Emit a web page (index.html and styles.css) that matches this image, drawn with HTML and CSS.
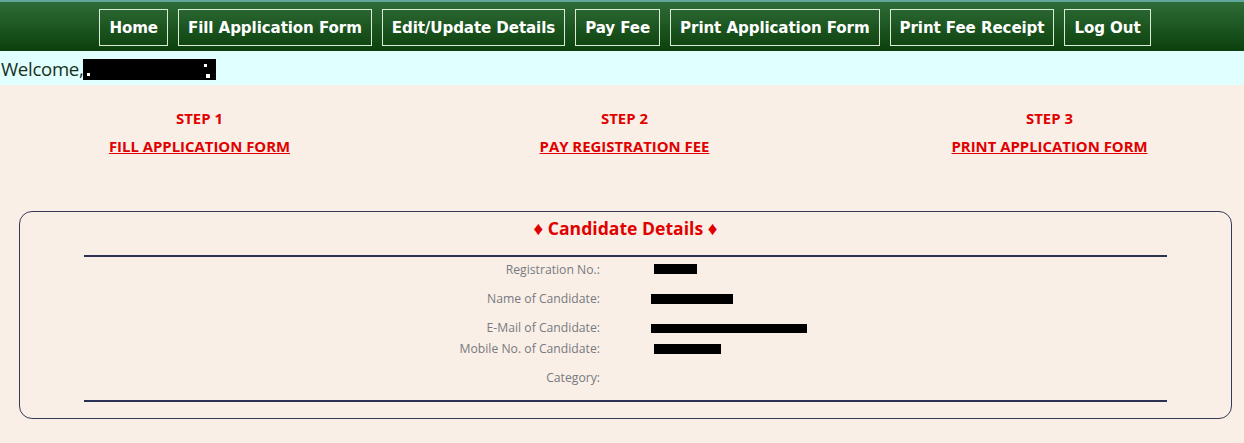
FILE: index.html
```html
<!DOCTYPE html>
<html lang="en">
<head>
<meta charset="utf-8">
<title>Candidate Dashboard</title>
<link rel="stylesheet" href="styles.css">
</head>
<body>
<header class="topbar">
  <nav class="nav">
    <a class="nav-btn" href="#">Home</a>
    <a class="nav-btn" href="#">Fill Application Form</a>
    <a class="nav-btn" href="#">Edit/Update Details</a>
    <a class="nav-btn" href="#">Pay Fee</a>
    <a class="nav-btn" href="#">Print Application Form</a>
    <a class="nav-btn" href="#">Print Fee Receipt</a>
    <a class="nav-btn" href="#">Log Out</a>
  </nav>
</header>
<div class="welcome">
  <span class="welcome-text">Welcome,</span><span class="redact redact-welcome"><i class="speck s1"></i><i class="speck s2"></i><i class="speck s3"></i></span>
</div>
<main class="main">
  <section class="steps">
    <div class="step">
      <div class="step-title">STEP 1</div>
      <a class="step-link" href="#">FILL APPLICATION FORM</a>
    </div>
    <div class="step">
      <div class="step-title">STEP 2</div>
      <a class="step-link" href="#">PAY REGISTRATION FEE</a>
    </div>
    <div class="step">
      <div class="step-title">STEP 3</div>
      <a class="step-link" href="#">PRINT APPLICATION FORM</a>
    </div>
  </section>
  <section class="card">
    <h2 class="card-title"><span class="diamond">♦</span> Candidate Details <span class="diamond">♦</span></h2>
    <hr class="rule">
    <div class="details">
      <div class="row">
        <div class="label">Registration No.:</div>
        <div class="value"><span class="redact r-reg"></span></div>
      </div>
      <div class="row">
        <div class="label">Name of Candidate:</div>
        <div class="value"><span class="redact r-name"></span></div>
      </div>
      <div class="row tight">
        <div class="label">E-Mail of Candidate:</div>
        <div class="value"><span class="redact r-mail"></span></div>
      </div>
      <div class="row">
        <div class="label">Mobile No. of Candidate:</div>
        <div class="value"><span class="redact r-mob"></span></div>
      </div>
      <div class="row last">
        <div class="label">Category:</div>
        <div class="value"></div>
      </div>
    </div>
    <hr class="rule rule-bottom">
  </section>
</main>
</body>
</html>
```
FILE: styles.css
```css
* { box-sizing: border-box; }
html, body { margin: 0; padding: 0; }
body {
  background: #faefe7;
  font-family: "Open Sans", "Noto Sans", sans-serif;
  width: 1244px;
  overflow: hidden;
}
.topbar {
  height: 51px;
  border-top: 2px solid #62a79b;
  background: linear-gradient(#2f6c37, #0b400c);
}
.nav {
  display: flex;
  justify-content: center;
  gap: 10px;
  padding: 7px 0 0 6px;
}
.nav-btn {
  display: flex;
  align-items: center;
  height: 37px;
  padding: 0 9px;
  border: 1px solid #d8ecd8;
  color: #ffffff;
  text-decoration: none;
  font-family: "DejaVu Sans", Verdana, sans-serif;
  font-weight: bold;
  font-size: 15.1px;
  letter-spacing: -0.1px;
}
.welcome {
  display: flex;
  align-items: center;
  height: 34px;
  background: #e0ffff;
  padding-left: 1px;
}
.welcome-text {
  font-size: 18.6px;
  color: #16301a;
  letter-spacing: -0.3px;
}
.redact {
  display: inline-block;
  background: #000;
  position: relative;
}
.redact-welcome { width: 133px; height: 21px; margin-top: 3px; }
.speck { position: absolute; background: #fff; width: 3px; height: 3px; }
.s1 { left: 4px; top: 14px; }
.s2 { left: 121px; top: 5px; }
.s3 { left: 123px; top: 15px; width: 4px; height: 4px; }
.main { padding-top: 23px; }
.steps {
  display: grid;
  grid-template-columns: repeat(3, 425px);
  margin-left: -13px;
  text-align: center;
  color: #e00000;
  font-weight: bold;
  font-size: 14.9px;
}
.step-title { line-height: 20px; margin-bottom: 8px; }
.step-link {
  display: inline-block;
  line-height: 20px;
  color: #e00000;
  text-decoration: underline;
}
.card {
  margin: 55px 12px 0 19px;
  height: 208px;
  border: 1px solid #363a56;
  border-radius: 13px;
  padding: 5px 64px 0;
}
.card-title {
  margin: 0;
  text-align: center;
  color: #e00000;
  font-size: 17.6px;
  font-weight: bold;
  line-height: 22px;
}
.diamond { font-size: 19px; }
.rule {
  margin: 16px 0 0;
  border: 0;
  height: 2px;
  background: #2b3152;
}
.rule-bottom { margin-top: 12px; }
.details { padding-top: 2px; }
.row {
  display: grid;
  grid-template-columns: 516px 1fr;
  column-gap: 50px;
  height: 21px;
  margin-bottom: 8px;
  align-items: center;
  color: #777a80;
  font-size: 12.2px;
}
.row.tight { margin-bottom: 0; }
.row.last { margin-bottom: 0; }
.label { text-align: right; }
.value { display: flex; align-items: center; }
.r-reg { width: 43px; height: 10px; margin-left: 4px; margin-top: -2px; }
.r-name { width: 82px; height: 10px; margin-left: 1px; }
.r-mail { width: 156px; height: 9px; margin-left: 1px; margin-top: 2px; }
.r-mob { width: 67px; height: 10px; margin-left: 4px; }
```
